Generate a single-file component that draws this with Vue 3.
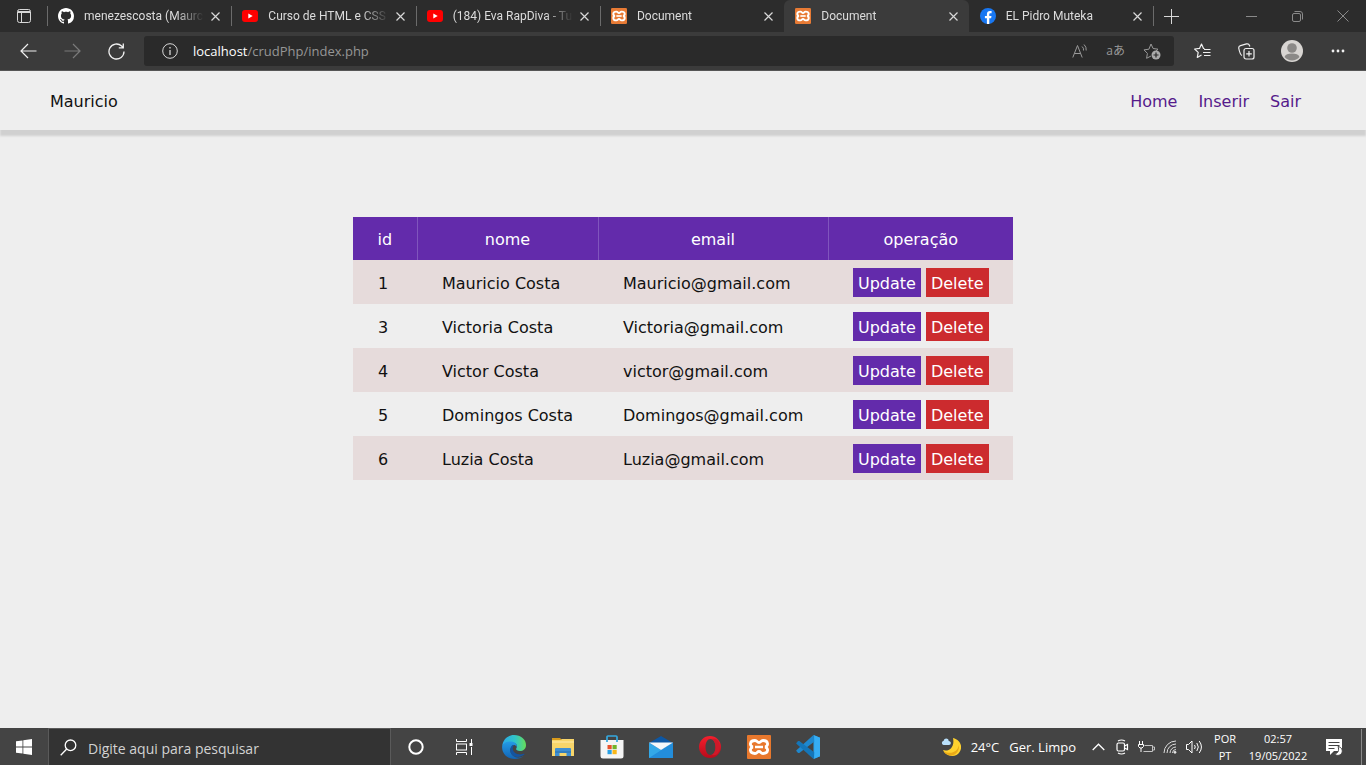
<script setup>
const tabs = [
  { id: 1, icon: 'github', title: 'menezescosta (Maurci' },
  { id: 2, icon: 'youtube', title: 'Curso de HTML e CSS' },
  { id: 3, icon: 'youtube', title: '(184) Eva RapDiva - Tu' },
  { id: 4, icon: 'xampp', title: 'Document' },
  { id: 5, icon: 'xampp', title: 'Document', active: true },
  { id: 6, icon: 'facebook', title: 'EL Pidro Muteka' },
]

const people = [
  { id: 1, nome: 'Mauricio Costa', email: 'Mauricio@gmail.com' },
  { id: 3, nome: 'Victoria Costa', email: 'Victoria@gmail.com' },
  { id: 4, nome: 'Victor Costa', email: 'victor@gmail.com' },
  { id: 5, nome: 'Domingos Costa', email: 'Domingos@gmail.com' },
  { id: 6, nome: 'Luzia Costa', email: 'Luzia@gmail.com' },
]
</script>

<template>
  <div class="screen">
    <div class="tabbar">
      <button class="tab-actions" aria-label="Tab actions">
        <svg width="14" height="14" viewBox="0 0 14 14" fill="none" stroke="#d8d8d8">
          <rect x=".5" y=".5" width="13" height="13" rx="2" />
          <path d="M1 2.5h12M1 3.5h12" />
          <path d="M4.5 4v9" />
        </svg>
      </button>
      <div class="tabs">
        <div v-for="t in tabs" :key="t.id" class="tab" :class="{ active: t.active }">
          <svg v-if="t.icon === 'github'" class="fav" viewBox="0 0 16 16" fill="#fff">
            <path d="M8 0C3.58 0 0 3.58 0 8c0 3.54 2.29 6.53 5.47 7.59.4.07.55-.17.55-.38 0-.19-.01-.82-.01-1.49-2.01.37-2.53-.49-2.69-.94-.09-.23-.48-.94-.82-1.13-.28-.15-.68-.52-.01-.53.63-.01 1.08.58 1.23.82.72 1.21 1.87.87 2.33.66.07-.52.28-.87.51-1.07-1.78-.2-3.64-.89-3.64-3.95 0-.87.31-1.59.82-2.15-.08-.2-.36-1.02.08-2.12 0 0 .67-.21 2.2.82.64-.18 1.32-.27 2-.27s1.36.09 2 .27c1.53-1.04 2.2-.82 2.2-.82.44 1.1.16 1.92.08 2.12.51.56.82 1.27.82 2.15 0 3.07-1.87 3.75-3.65 3.95.29.25.54.73.54 1.48 0 1.07-.01 1.93-.01 2.2 0 .21.15.46.55.38A8.01 8.01 0 0 0 16 8c0-4.42-3.58-8-8-8z" />
          </svg>
          <svg v-else-if="t.icon === 'youtube'" class="fav" viewBox="0 0 16 16">
            <rect y="2" width="16" height="12" rx="3" fill="#f00" />
            <path d="M6.3 5.5v5L10.7 8z" fill="#fff" />
          </svg>
          <svg v-else-if="t.icon === 'xampp'" class="fav" viewBox="0 0 24 24">
            <rect width="24" height="24" rx="2" fill="#e87b35" />
            <path d="M8 5.500c-6 0-5.500 6-2 6.500-3.500.5-4 6.500 2 6.500 2.500 0 2-2 4-2s1.500 2 4 2c6 0 5.500-6 2-6.500 3.500-.5 4-6.500-2-6.500-2.500 0-2 2-4 2s-1.500-2-4-2z" fill="none" stroke="#fff" stroke-width="2.800" />
            <path d="M8 12h8" stroke="#fff" stroke-width="2.500" />
          </svg>
          <svg v-else class="fav" viewBox="0 0 16 16">
            <circle cx="8" cy="8" r="8" fill="#1877f2" />
            <path d="M6.900 16v-5.700H4.900V8h2V6.200c0-2 1.200-3.100 3-3.100.9 0 1.700.1 1.700.1v2h-1c-1 0-1.300.6-1.300 1.200V8h2.200l-.4 2.300H9.300V16z" fill="#fff" />
          </svg>
          <span class="tab-title">{{ t.title }}</span>
          <button class="tab-close" aria-label="Close tab">
            <svg width="9" height="9" viewBox="0 0 9 9" stroke="#d8d8d8" stroke-width="1.200"><path d="M.5.5l8 8M8.500.5l-8 8" /></svg>
          </button>
        </div>
      </div>
      <button class="new-tab" aria-label="New tab">
        <svg width="15" height="15" viewBox="0 0 15 15" stroke="#d8d8d8"><path d="M7.500 0v15M0 7.500h15" /></svg>
      </button>
      <div class="win-controls">
        <button aria-label="Minimize"><svg width="11" height="11" viewBox="0 0 11 11" stroke="#8a8a8a"><path d="M0 5.500h11" /></svg></button>
        <button aria-label="Restore"><svg width="11" height="11" viewBox="0 0 11 11" fill="none" stroke="#8a8a8a"><rect x=".5" y="2.500" width="8" height="8" rx="1.500" /><path d="M2.500.5H8a2.500 2.500 0 0 1 2.500 2.500v5.500" /></svg></button>
        <button aria-label="Close"><svg width="12" height="12" viewBox="0 0 12 12" stroke="#8a8a8a"><path d="M.5.5l11 11M11.500.5l-11 11" /></svg></button>
      </div>
    </div>

    <div class="toolbar">
      <button class="tool" aria-label="Back"><svg width="17" height="16" viewBox="0 0 17 16" fill="none" stroke="#f0f0f0" stroke-width="1.200"><path d="M16.500 8H1M8 1L1 8l7 7" /></svg></button>
      <button class="tool" aria-label="Forward"><svg width="17" height="16" viewBox="0 0 17 16" fill="none" stroke="#7b7b7b" stroke-width="1.200"><path d="M.5 8H16M9 1l7 7-7 7" /></svg></button>
      <button class="tool" aria-label="Refresh"><svg width="17" height="17" viewBox="0 0 17 17" fill="none" stroke="#f0f0f0" stroke-width="1.300"><path d="M16 8.500A7.500 7.500 0 1 1 13.600 3L15 4.500M15.300.5v4.300h-4.500" /></svg></button>
      <div class="address">
        <svg width="16" height="16" viewBox="0 0 16 16" fill="none" stroke="#d8d8d8"><circle cx="8" cy="8" r="7.300" /><path d="M8 7v5M8 4v1.500" stroke-width="1.300" /></svg>
        <span class="url"><b>localhost</b>/crudPhp/index.php</span>
        <div class="address-icons">
          <svg width="16" height="16" viewBox="0 0 16 16" fill="none" stroke="#999"><path d="M.8 14.500L5.500 2.500l4.700 12M2.500 10.500h6M10 3.500a4 4 0 0 1 1.500 4M12 1.500a7 7 0 0 1 2.200 6" /></svg>
          <span class="translate">aあ</span>
          <svg width="18" height="17" viewBox="0 0 18 17"><path d="M8 1l2.100 4.500 4.900.7-3 2.800M8 13l-4.400 2.300.8-4.900L1 6.900l4.900-.7L8 1" fill="none" stroke="#999" stroke-linejoin="round" /><circle cx="13" cy="12" r="4.500" fill="#aaa" /><path d="M13 9.500v5M10.500 12h5" stroke="#2a2a2a" stroke-width="1.200" /></svg>
        </div>
      </div>
      <button class="side-tool" aria-label="Favorites"><svg width="17" height="16" viewBox="0 0 17 16" fill="none" stroke="#f0f0f0" stroke-width="1.200" stroke-linejoin="round"><path d="M10.500 5.500L9.500 5.500 7.500 1 5.500 5.400.6 6l3.600 3.400-.9 5L7.500 12M10 6.500h6.500M9 9.500h7.500M10 12.500h6.500" /></svg></button>
      <button class="side-tool" aria-label="Collections"><svg width="17" height="17" viewBox="0 0 17 17" fill="none" stroke="#f0f0f0" stroke-width="1.200"><rect x="6" y="5.500" width="10" height="10.500" rx="2" /><path d="M11 8v5.500M8.200 10.800h5.600M4 12.500C2.800 12 1.500 9 .8 5.500.5 4 1 3 2.500 2.600l6-1.700c1.500-.4 2.500.2 3 1.600l.3 1" /></svg></button>
      <button class="side-tool profile" aria-label="Profile"><svg width="22" height="22" viewBox="0 0 22 22"><circle cx="11" cy="11" r="11" fill="#d8d5d2" /><circle cx="11" cy="8" r="4.800" fill="#8b8987" /><path d="M3.500 17c1-2.800 3.500-3.500 7.500-3.500s6.500.7 7.500 3.500a10 10 0 0 1-15 0z" fill="#8b8987" /></svg></button>
      <button class="side-tool" aria-label="Settings"><svg width="14" height="4" viewBox="0 0 14 4" fill="#f0f0f0"><circle cx="2" cy="2" r="1.400" /><circle cx="7" cy="2" r="1.400" /><circle cx="12" cy="2" r="1.400" /></svg></button>
    </div>

    <main class="page">
      <header class="site-header">
        <span>Mauricio</span>
        <nav>
          <a href="#home">Home</a>
          <a href="#inserir">Inserir</a>
          <a href="#sair">Sair</a>
        </nav>
      </header>
      <table>
        <colgroup><col class="c-id" /><col class="c-nome" /><col class="c-email" /><col class="c-op" /></colgroup>
        <thead>
          <tr><th>id</th><th>nome</th><th>email</th><th>operação</th></tr>
        </thead>
        <tbody>
          <tr v-for="p in people" :key="p.id">
            <td>{{ p.id }}</td>
            <td>{{ p.nome }}</td>
            <td>{{ p.email }}</td>
            <td class="op-cell">
              <div class="ops">
                <a href="#update" class="update">Update</a>
                <a href="#delete" class="delete">Delete</a>
              </div>
            </td>
          </tr>
        </tbody>
      </table>
    </main>

    <footer class="taskbar">
      <button class="start" aria-label="Start">
        <svg width="16" height="16" viewBox="0 0 16 16" fill="#fff"><path d="M0 2.300L6.500 1.400v6.200H0zM7.300 1.200L16 0v7.600H7.300zM0 8.400h6.500v6.200L0 13.700zM7.300 8.400H16V16l-8.700-1.200z" /></svg>
      </button>
      <label class="search">
        <svg width="17" height="17" viewBox="0 0 17 17" fill="none" stroke="#fff" stroke-width="1.300"><circle cx="10.500" cy="6.300" r="5.300" /><path d="M6.700 10L.7 16.300" /></svg>
        <input type="text" aria-label="Pesquisar" placeholder="Digite aqui para pesquisar" />
      </label>
      <div class="apps">
        <button aria-label="Cortana"><svg width="16" height="16" viewBox="0 0 16 16" fill="none" stroke="#fff" stroke-width="2"><circle cx="8" cy="8" r="6.700" /></svg></button>
        <button aria-label="Task view"><svg width="17" height="16" viewBox="0 0 17 16" fill="none" stroke="#fff"><path d="M.5 0v2.500h10V0M.5 16v-2.500h10V16M15.500 0v4M15.500 8v8" /><rect x=".5" y="5" width="10" height="6" /><path d="M13.500 5.500h3" stroke-width="3" /></svg></button>
        <button aria-label="Edge">
          <svg width="24" height="24" viewBox="0 0 24 24">
            <defs>
              <linearGradient id="eg1" x1="0" y1="0" x2="1" y2="0"><stop offset="0" stop-color="#2aa8e8" /><stop offset=".55" stop-color="#31c5c8" /><stop offset="1" stop-color="#66dc58" /></linearGradient>
              <linearGradient id="eg2" x1="0" y1="0" x2="0" y2="1"><stop offset="0" stop-color="#249be5" /><stop offset="1" stop-color="#1264b5" /></linearGradient>
            </defs>
            <path d="M.2 11C1 4.500 5.500 0 12 0c7 0 12 4.500 12 10 0 4-3 6-6 6-3.500 0-4.500-1.500-3.500-3 1.500-3-1-5.500-5-5.500C5 7.500 1.500 9 .2 11z" fill="url(#eg1)" />
            <path d="M.2 11C1.200 8.500 4 6.500 8 6.500c4.500 0 7.500 2.500 6.800 5.500-.8-1.500-2-2-3.300-2-5 2.500-4 10 2 12.300 3 1 6.300.2 8.500-1.500C19.500 23 16 24 12.500 24 5 24-.7 18 .2 11z" fill="url(#eg2)" />
            <path d="M11 10c-3 1-4 7.500-.5 10.300 3.500 2.700 8 2 11.800-.8.500-.4 0-1-.5-.8-5.300 2.200-11-.7-11-5.200 0-1.300.5-2.500 1.200-3.300z" fill="#1454a0" />
          </svg>
        </button>
        <button aria-label="Explorer">
          <svg width="22" height="20" viewBox="0 0 22 20"><path d="M0 1h8l2 2H0z" fill="#d99b1c" /><path d="M0 3h8.500l1.500-1h12v17H0z" fill="#f7d56a" /><path d="M0 4h22v2H0z" fill="#fbe08b" /><path d="M3 19v-7q0-1 1-1h14q1 0 1 1v7h-4.500v-3h-7v3z" fill="#3e8fd3" /><path d="M3 14h16v2H3z" fill="#327fc0" /></svg>
        </button>
        <button aria-label="Store">
          <svg width="24" height="24" viewBox="0 0 24 24"><path d="M7 6V2q0-1 1-1h8q1 0 1 1v4" fill="none" stroke="#35a9df" stroke-width="1.700" /><path d="M.5 5h23v16q0 2.500-2.500 2.500H3Q.5 23.500.5 21z" fill="#f5f5f5" /><path d="M7 5v2M17 5v2" stroke="#35a9df" stroke-width="1.700" /><path d="M7.500 10h4.200v4.200H7.500z" fill="#e9522c" /><path d="M12.500 10h4.200v4.200h-4.200z" fill="#72b42a" /><path d="M7.500 15h4.200v4.200H7.500z" fill="#2aa1e5" /><path d="M12.500 15h4.200v4.200h-4.200z" fill="#f9b719" /></svg>
        </button>
        <button aria-label="Mail">
          <svg width="24" height="24" viewBox="0 0 24 24"><path d="M0 8l12-7 12 7v8H0z" fill="#0d57a4" /><path d="M0 7.500l12 7.500L24 7.500V23H0z" fill="#33a8e8" /><path d="M0 23l24-15.500V23z" fill="#238dda" /><path d="M0 7.500h24l-12 7.500z" fill="#f5f7fa" /></svg>
        </button>
        <button aria-label="Opera">
          <svg width="24" height="24" viewBox="0 0 24 24"><defs><linearGradient id="op" x1="0" y1="0" x2="0" y2="1"><stop offset="0" stop-color="#f51f2d" /><stop offset="1" stop-color="#b80b1b" /></linearGradient></defs><path fill="url(#op)" fill-rule="evenodd" d="M12 1a11 11 0 1 0 0 22 11 11 0 0 0 0-22zm.5 3c3 0 5 3.500 5 8s-2 8-5 8-5-3.500-5-8 2-8 5-8z" /><path d="M13.500 4.200c2.300.7 4 3.800 4 7.800s-1.700 7.100-4 7.800c2 1 4 .5 5.800-.8a10.800 10.800 0 0 0 0-14c-1.800-1.300-3.800-1.800-5.800-.8z" fill="#d01929" /></svg>
        </button>
        <button aria-label="XAMPP">
          <svg width="24" height="24" viewBox="0 0 24 24"><rect width="24" height="24" rx="1" fill="#e8782d" /><path d="M8 5.500c-6 0-5.500 6-2 6.500-3.500.5-4 6.500 2 6.500 2.500 0 2-2 4-2s1.500 2 4 2c6 0 5.500-6 2-6.500 3.500-.5 4-6.500-2-6.500-2.500 0-2 2-4 2s-1.500-2-4-2z" fill="none" stroke="#fff" stroke-width="2.800" /><path d="M8 12h8" stroke="#fff" stroke-width="2.500" /></svg>
        </button>
        <button aria-label="VS Code">
          <svg width="24" height="24" viewBox="0 0 24 24"><path d="M17.500 0L24 2.800v18.400L17.500 24z" fill="#2ba4ed" /><path d="M17.500 0L1 14.800l-.9 1 2 2.200 1.200.1L18.500 6.500z" fill="#1f88ce" /><path d="M17.500 24L1 9.200l-.9-1L2.100 6l1.200-.1 15.200 11.600z" fill="#1476b9" /><path d="M17.500 0L24 2.800v18.400L17.500 24l1-1V1z" fill="#36adf4" /></svg>
        </button>
      </div>
      <div class="tray">
        <button class="weather">
          <svg width="20" height="20" viewBox="0 0 20 20"><path d="M12 1c9 2 11 12 3.500 17C10.500 20.500 4 18 2 13c6 2 12-3 10-12z" fill="#ffd22e" /><path d="M17.800 8c1 5-2 9.500-7 10.500-3 .3-6-1-8.300-4.300C10 18 17 14.500 17.800 8z" fill="#eaa916" /><path d="M2.500 8a2.200 2.200 0 0 1 .2-4.300C3.300.7 7.500 1 7.700 4 10.500 4 10.500 8 8 8z" fill="#b9e0fb" /></svg>
          <span>24°C</span>
          <span>Ger. Limpo</span>
        </button>
        <button class="cell" aria-label="Hidden icons"><svg width="13" height="8" viewBox="0 0 13 8" fill="none" stroke="#fff" stroke-width="1.300"><path d="M.7 7L6.500 1.200 12.300 7" /></svg></button>
        <button class="cell" aria-label="Meet Now"><svg width="13" height="16" viewBox="0 0 13 16" fill="none" stroke="#fff" stroke-width="1.200"><rect x="1" y="4" width="7.500" height="8" rx="1.500" /><path d="M8.500 7l3-1.500v5L8.500 9M2 2q3.500-2 7 0M2 14q3.500 2 7 0" /></svg></button>
        <button class="cell" aria-label="Battery"><svg width="17" height="13" viewBox="0 0 17 13" fill="none" stroke="#fff"><path d="M6.500 4.500h8v6h-9M14.500 6h2v3h-2" stroke="#c4c4c4" /><path d="M1.500 0v3M4.500 0v3M.5 3.500h5v2L4 7H2L.5 5.500zM3 7v4" /></svg></button>
        <button class="cell" aria-label="Network"><svg width="14" height="14" viewBox="0 0 14 14" fill="none" stroke="#ddd"><path d="M1 13A12 12 0 0 1 13 1M4 13a9 9 0 0 1 9-9M7 13a6 6 0 0 1 6-6" /><path d="M9.500 13a3.500 3.500 0 0 1 3.500-3.500" /><circle cx="12" cy="12.300" r="1" fill="#fff" /></svg></button>
        <button class="cell" aria-label="Volume"><svg width="17" height="14" viewBox="0 0 17 14" fill="none" stroke="#fff"><path d="M.5 4.500h2L6 1v12L2.500 9.500h-2zM8.500 5q1.500 2 0 4M10.800 3q3 4 0 8M13.200 1q4.500 6 0 12" /></svg></button>
        <button class="lang"><span>POR</span><span>PT</span></button>
        <button class="clock"><span>02:57</span><span>19/05/2022</span></button>
        <button class="notif" aria-label="Notifications"><svg width="17" height="17" viewBox="0 0 17 17"><path d="M0 0h16v12H8l-4 4v-4H0z" fill="#fff" /><path d="M2.500 3.500h11M2.500 6.500h11M2.500 9.500h6" stroke="#444" /><path d="M12 7.500c3.500.5 5.500 4 3.500 7-2 2.500-5.500 2.500-7 .2 3.500 0 5-3.500 3.500-7.200z" fill="#fff" stroke="#444" /></svg></button>
        <button class="desktop" aria-label="Show desktop"></button>
      </div>
    </footer>
  </div>
</template>

<style>
body {
  margin: 0;
}
</style>

<style scoped>
.screen {
  min-height: 100vh;
  display: flex;
  flex-direction: column;
  background: #eee;
  font-family: "Open Sans", "Noto Sans", "Noto Sans CJK JP", sans-serif;
}
.screen * {
  box-sizing: border-box;
}
button {
  display: flex;
  align-items: center;
  justify-content: center;
  padding: 0;
  border: 0;
  background: none;
  color: inherit;
  font: inherit;
}
svg {
  flex: none;
  display: block;
}
.tabbar {
  display: flex;
  height: 32px;
  background: #2c2c2c;
  color: #dcdcdc;
  font: 12px Roboto, "Open Sans", sans-serif;
}
.tab-actions {
  width: 47px;
}
.tabs {
  display: flex;
  flex: 0 1 1106px;
  min-width: 0;
}
.tab {
  display: flex;
  align-items: center;
  flex: 1 1 0;
  min-width: 0;
  padding: 0 10px 0 11px;
  background: linear-gradient(#6b6b6b, #6b6b6b) 0 6px / 1px 20px no-repeat;
}
.tab.active {
  background: #3b3b3b;
  border-radius: 6px 6px 0 0;
}
.tab.active + .tab {
  background: none;
}
.fav {
  width: 16px;
  height: 16px;
}
.tab-title {
  flex: 1;
  margin: 0 6px 0 10px;
  overflow: hidden;
  white-space: nowrap;
  mask-image: linear-gradient(90deg, #000 calc(100% - 28px), transparent);
}
.tab-close {
  width: 11px;
  height: 16px;
}
.new-tab {
  width: 36px;
  background: linear-gradient(#6b6b6b, #6b6b6b) 0 6px / 1px 20px no-repeat;
}
.win-controls {
  display: flex;
  margin-left: auto;
}
.win-controls button {
  width: 46px;
}
.toolbar {
  display: flex;
  align-items: center;
  height: 39px;
  padding: 0 6px;
  background: #3b3b3b;
  border-bottom: 1px solid #555;
}
.tool {
  width: 44px;
  height: 32px;
}
.address {
  display: flex;
  align-items: center;
  flex: 1;
  height: 30px;
  margin: 0 6px;
  padding: 0 13px 0 18px;
  border-radius: 3px;
  background: #2a2a2a;
}
.url {
  margin-left: 15px;
  color: #969696;
  font-size: 13px;
}
.url b {
  color: #fff;
  font-weight: 400;
}
.address-icons {
  display: flex;
  align-items: center;
  gap: 18px;
  margin-left: auto;
}
.translate {
  color: #999;
  font-size: 12px;
  line-height: 16px;
}
.side-tool {
  width: 44px;
  height: 32px;
}
.side-tool.profile {
  width: 48px;
}
.page {
  flex: 1;
  color: #111;
  font-family: Verdana, "DejaVu Sans", sans-serif;
  font-size: 16px;
}
.site-header {
  display: flex;
  align-items: center;
  justify-content: space-between;
  height: 59px;
  padding: 2px 65px 0 50px;
  box-shadow: 0 6px 2px #d0d0d0;
}
nav {
  display: flex;
  gap: 21px;
}
nav a {
  color: #551a8b;
  text-decoration: none;
}
table {
  width: 660px;
  max-width: 100%;
  margin: 87px auto 0;
  border-collapse: collapse;
  table-layout: fixed;
}
.c-id {
  width: 64px;
}
.c-nome {
  width: 181px;
}
.c-email {
  width: 230px;
}
th {
  height: 43px;
  padding: 2px 0 0;
  background: #632bab;
  color: #fff;
  font-weight: 400;
}
th + th {
  border-left: 1px solid #8055bd;
}
td {
  height: 44px;
  padding: 2px 0 0 25px;
  white-space: nowrap;
}
.op-cell {
  padding-top: 0;
}
tbody tr:nth-child(odd) {
  background: #e6dbdb;
}
.ops {
  display: flex;
  gap: 5px;
}
.ops a {
  padding: 6px 5px 4px;
  color: #fff;
  line-height: 19px;
  text-decoration: none;
}
.update {
  background: #632bab;
}
.delete {
  background: #cc2b2e;
}
.taskbar {
  display: flex;
  height: 37px;
  background: #444;
  color: #fff;
}
.start {
  width: 48px;
}
.search {
  display: flex;
  align-items: center;
  flex: 0 1 343px;
  padding-left: 11px;
  border: 1px solid #5a5a5a;
  border-bottom: 0;
  background: #333;
}
.search input {
  flex: 1;
  min-width: 0;
  margin-left: 11px;
  padding: 2px 0 0;
  border: 0;
  outline: 0;
  background: none;
  color: #fff;
  font: 14px "Open Sans", sans-serif;
}
.search input::placeholder {
  color: #d2d2d2;
  opacity: 1;
}
.apps {
  display: flex;
  padding-top: 1px;
}
.apps button {
  width: 49px;
}
.tray {
  display: flex;
  margin-left: auto;
  padding-top: 1px;
  font-size: 11px;
}
.weather {
  gap: 10px;
  margin-right: 10px;
  font-size: 13px;
  white-space: nowrap;
}
.cell {
  width: 24px;
}
.lang,
.clock {
  flex-direction: column;
  line-height: 17px;
}
.lang {
  width: 38px;
}
.clock {
  width: 68px;
}
.notif {
  width: 44px;
}
.desktop {
  width: 5px;
  margin-left: 5px;
  border-left: 1px solid #8a8a8a;
}
</style>
